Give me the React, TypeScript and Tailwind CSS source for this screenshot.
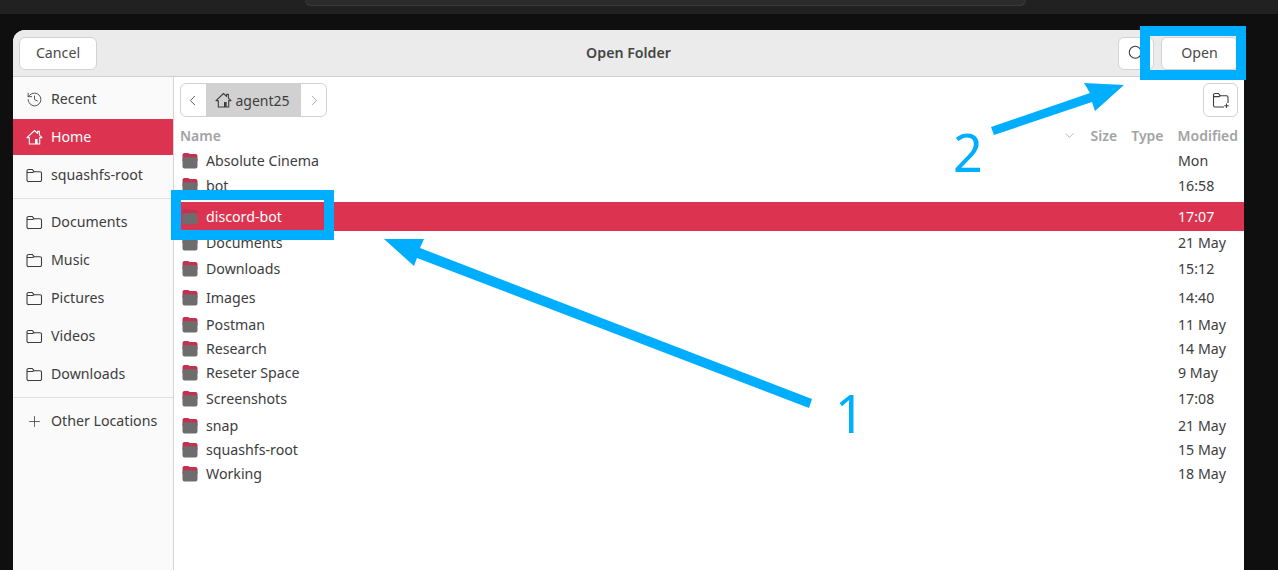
import { History, Plus, ChevronLeft, ChevronRight, ChevronDown, Search } from "lucide-react";

const files = [
  { n: "Absolute Cinema", m: "Mon", c: "h-[24px]" },
  { n: "bot", m: "16:58", c: "h-[24px] mt-[1px]" },
  { n: "discord-bot", m: "17:07", c: "h-[29px] mt-[4px] bg-[#dc3450] text-white" },
  { n: "Documents", m: "21 May", c: "h-[24px]" },
  { n: "Downloads", m: "15:12", c: "h-[24px] mt-[2px]" },
  { n: "Images", m: "14:40", c: "h-[24px] mt-[5px]" },
  { n: "Postman", m: "11 May", c: "h-[24px] mt-[3px]" },
  { n: "Research", m: "14 May", c: "h-[24px]" },
  { n: "Reseter Space", m: "9 May", c: "h-[24px]" },
  { n: "Screenshots", m: "17:08", c: "h-[24px] mt-[2px]" },
  { n: "snap", m: "21 May", c: "h-[24px] mt-[3px]" },
  { n: "squashfs-root", m: "15 May", c: "h-[24px]" },
  { n: "Working", m: "18 May", c: "h-[24px]" },
];

function FileFolder() {
  return (
    <svg width="16" height="16" viewBox="0 0 16 16" className="shrink-0">
      <path d="M2.5 0h3.5L8 1h5.5a2 2 0 0 1 2 2v5H.5V2a2 2 0 0 1 2-2z" fill="#c4304f" />
      <path d="M2.5 4.2H13.5a2 2 0 0 1 2 2v7.3a2 2 0 0 1-2 2h-11a2 2 0 0 1-2-2V6.2a2 2 0 0 1 2-2z" fill="#6f6c6d" />
    </svg>
  );
}

function PlaceFolder() {
  return (
    <svg width="17" height="17" viewBox="0 0 17 17" fill="none" stroke="currentColor" strokeWidth="1.1" className="shrink-0">
      <path d="M2.5 2.5h3.8l1.7 2.2h6a1.5 1.5 0 0 1 1.5 1.5v6.8a1.5 1.5 0 0 1-1.5 1.5h-11A1.5 1.5 0 0 1 1 13V4a1.5 1.5 0 0 1 1.5-1.5z" />
      <path d="M1 5.5h5.5L8 4.7" />
    </svg>
  );
}

function HomeIcon() {
  return (
    <svg width="17" height="17" viewBox="0 0 17 17" fill="none" stroke="currentColor" strokeWidth="1.1" className="shrink-0">
      <path d="M8.5 1.5 1 8.6h2.3v6.4h10.4V8.6H16l-2.6-2.5V2.4h-1.8v2Z" strokeLinejoin="round" />
      <rect x="9" y="10" width="2.6" height="5" fill="currentColor" stroke="none" />
    </svg>
  );
}

function NewFolder() {
  return (
    <svg width="18" height="17" viewBox="0 0 18 17" fill="none" stroke="currentColor" strokeWidth="1.1">
      <path d="M12 15H3a1.5 1.5 0 0 1-1.5-1.5V3A1.5 1.5 0 0 1 3 1.5h3.5L8.2 3.7h6.3A1.5 1.5 0 0 1 16 5.2V11" />
      <path d="M1.5 4.6H7L8.2 3.7" />
      <path d="M14.5 11.5v4.5M12.3 13.8h4.5" />
    </svg>
  );
}

const places2 = ["Documents", "Music", "Pictures", "Videos", "Downloads"];

export default function App() {
  return (
    <div className="relative h-[570px] w-[1278px] overflow-hidden bg-[#0f0f0f] font-['Noto_Sans','Open_Sans',sans-serif] text-[14.2px] text-[#3d3d3d]">
      <div className="h-[14px] bg-[#212121] pl-[305px] pr-[252px]">
        <div className="h-[6px] rounded-b-lg border border-t-0 border-[#3a3a3a] bg-[#2b2b2b]" />
      </div>
      <div className="ml-[13px] mt-[16px] flex h-[540px] w-[1231px] flex-col overflow-hidden rounded-t-xl bg-white">
        <header className="grid h-[47px] shrink-0 grid-cols-3 items-center border-b border-[#cfcfcf] bg-[#ebebeb] px-[6px]">
          <div>
            <button className="h-[33px] w-[78px] rounded-md border border-[#d2d2d2] bg-white text-[#4a4a4a]">Cancel</button>
          </div>
          <div className="text-center font-semibold text-[#444444]">Open Folder</div>
          <div className="flex items-center justify-end gap-[7px]">
            <button className="flex h-[33px] w-[36px] items-center justify-center rounded-md border border-[#d2d2d2] bg-white">
              <Search size={18} strokeWidth={1.4} />
            </button>
            <button className="h-[33px] w-[77px] rounded-md border border-[#d2d2d2] bg-white text-[#4a4a4a]">Open</button>
          </div>
        </header>
        <div className="flex min-h-0 flex-1">
          <aside className="w-[161px] shrink-0 border-r border-[#d4d4d4] bg-[#fafafa]">
            <div className="border-b border-[#dfdfdf] pb-[3px] pt-[3px]">
              <div className="flex h-[39px] items-center gap-[8px] pl-[13px] pb-[1px]">
                <History size={17} strokeWidth={1.2} className="shrink-0" />
                <span>Recent</span>
              </div>
              <div className="flex h-[36px] items-center gap-[8px] bg-[#dc3450] pl-[13px] text-white">
                <HomeIcon />
                <span>Home</span>
              </div>
              <div className="flex h-[40px] items-center gap-[8px] pl-[13px]">
                <PlaceFolder />
                <span>squashfs-root</span>
              </div>
            </div>
            <div className="border-b border-[#dfdfdf] pb-[4px] pt-[4px]">
              {places2.map((n) => (
                <div key={n} className="flex h-[38px] items-center gap-[8px] pl-[13px]">
                  <PlaceFolder />
                  <span>{n}</span>
                </div>
              ))}
            </div>
            <div className="mt-[4px] flex h-[38px] items-center gap-[8px] pl-[13px]">
              <Plus size={17} strokeWidth={1.1} className="shrink-0" />
              <span>Other Locations</span>
            </div>
          </aside>
          <main className="min-w-0 flex-1">
            <div className="flex h-[46px] items-center justify-between px-[6px]">
              <div className="flex h-[34px] items-center overflow-hidden rounded-md border border-[#d2d2d2]">
                <div className="flex h-full w-[25px] items-center justify-center pr-[2px]"><ChevronLeft size={17} strokeWidth={1.2} /></div>
                <div className="flex h-full w-[95px] items-center justify-center gap-[3px] bg-[#d1d1d1] pr-[2px] text-[14px]">
                  <HomeIcon />
                  <span>agent25</span>
                </div>
                <div className="flex h-full w-[25px] items-center justify-center pl-[2px] text-[#9a9a9a]"><ChevronRight size={17} strokeWidth={1.2} /></div>
              </div>
              <button className="flex h-[34px] w-[35px] items-center justify-center rounded-md border border-[#d2d2d2]">
                <NewFolder />
              </button>
            </div>
            <div className="flex h-[26px] items-center px-[6px] pb-[1px] text-[14px] font-semibold text-[#a3a3a3]">
              <span>Name</span>
              <ChevronDown size={15} strokeWidth={1.2} className="ml-auto" />
              <span className="ml-[14px]">Size</span>
              <span className="ml-[14px]">Type</span>
              <span className="ml-[14px]">Modified</span>
            </div>
            <div>
              {files.map((f) => (
                <div key={f.n} className={`flex items-center pl-[8px] ${f.c}`}>
                  <FileFolder />
                  <span className="ml-[8px]">{f.n}</span>
                  <span className="ml-auto w-[66px]">{f.m}</span>
                </div>
              ))}
            </div>
          </main>
        </div>
      </div>

      <div className="absolute left-[171px] top-[190px] h-[50px] w-[163px] border-[10px] border-[#00aeff]" />
      <div className="absolute left-[1140px] top-[26px] h-[54px] w-[106px] border-[10px] border-[#00aeff]" />
      <svg className="absolute left-0 top-0" width="1278" height="570" viewBox="0 0 1278 570">
        <polygon points="384,239 424,239 420,248 812,399 809,408 417,258 414,266" fill="#00aeff" />
        <polygon points="1124,85 1084,83 1090,93 991,127 994,135 1092,102 1095,111" fill="#00aeff" />
      </svg>
      <span className="absolute left-[835px] top-[381px] text-[52px] leading-[64px] text-[#00aeff]">1</span>
      <span className="absolute left-[953px] top-[120px] text-[52px] leading-[64px] text-[#00aeff]">2</span>
    </div>
  );
}
